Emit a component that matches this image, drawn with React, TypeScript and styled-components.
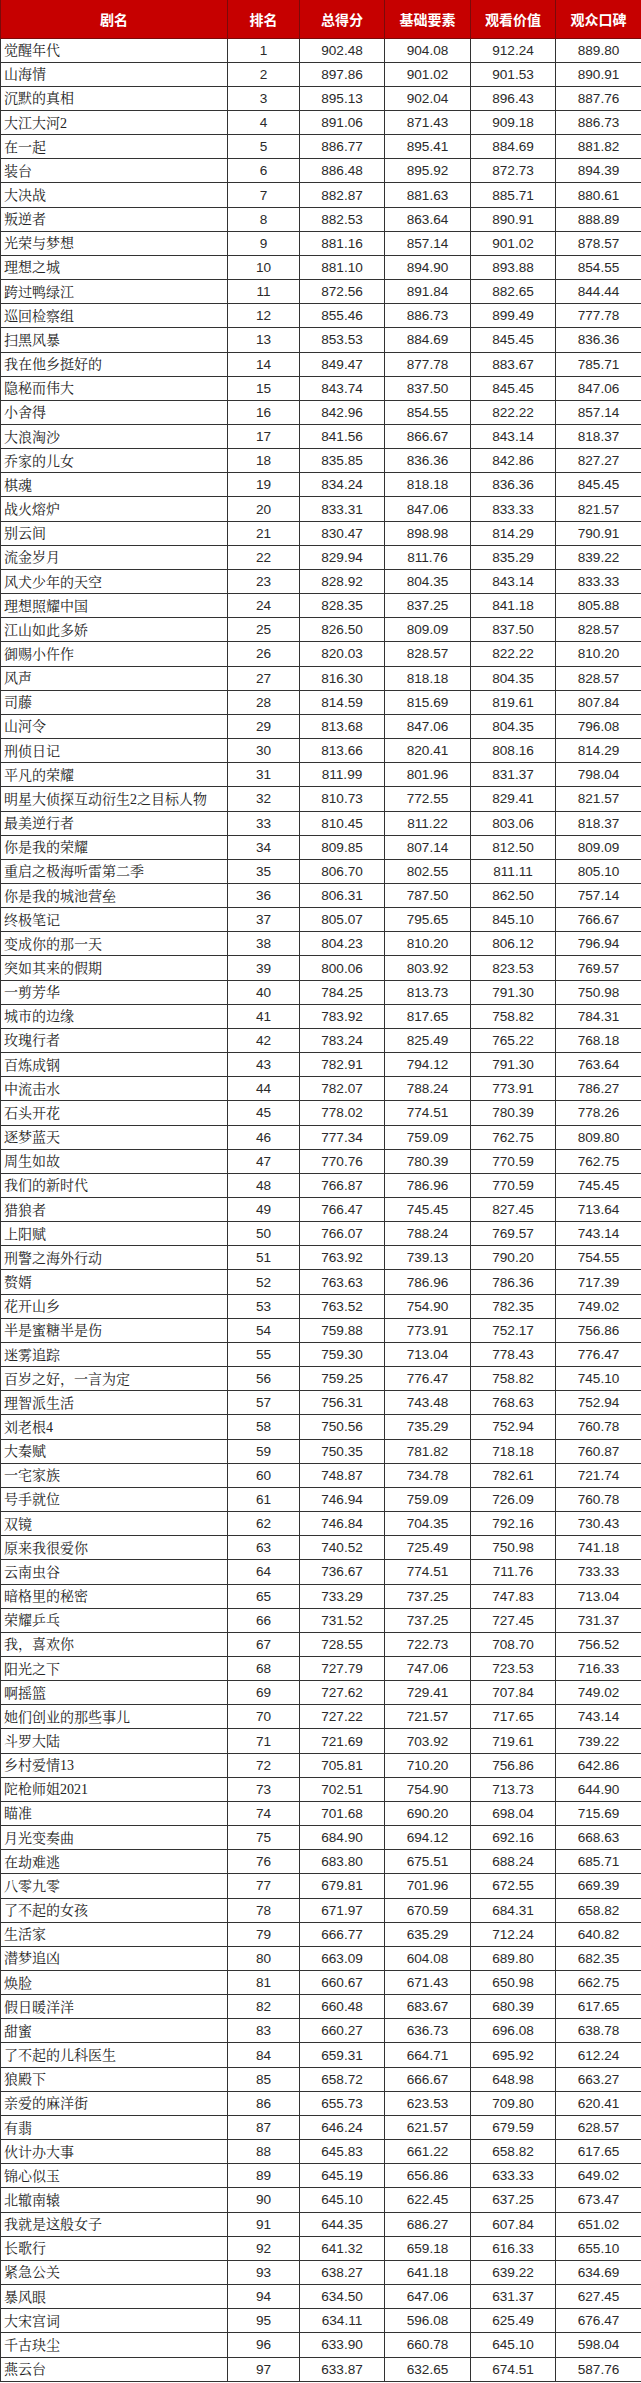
import React from "react";
import styled, { createGlobalStyle } from "styled-components";

const HEAD_RED = "#c60000";
const LINE = "#333333";
const TEXT = "#222222";

const GlobalStyle = createGlobalStyle`
  html, body {
    margin: 0;
    padding: 0;
    background: #ffffff;
  }
`;

const COLUMNS = [
  { title: "剧名", width: 227 },
  { title: "排名", width: 72 },
  { title: "总得分", width: 85 },
  { title: "基础要素", width: 86 },
  { title: "观看价值", width: 85 },
  { title: "观众口碑", width: 86 },
];

// 剧名 | 总得分 | 基础要素 | 观看价值 | 观众口碑 (排名 = 行号)
const RAW = `觉醒年代 902.48 904.08 912.24 889.80
山海情 897.86 901.02 901.53 890.91
沉默的真相 895.13 902.04 896.43 887.76
大江大河2 891.06 871.43 909.18 886.73
在一起 886.77 895.41 884.69 881.82
装台 886.48 895.92 872.73 894.39
大决战 882.87 881.63 885.71 880.61
叛逆者 882.53 863.64 890.91 888.89
光荣与梦想 881.16 857.14 901.02 878.57
理想之城 881.10 894.90 893.88 854.55
跨过鸭绿江 872.56 891.84 882.65 844.44
巡回检察组 855.46 886.73 899.49 777.78
扫黑风暴 853.53 884.69 845.45 836.36
我在他乡挺好的 849.47 877.78 883.67 785.71
隐秘而伟大 843.74 837.50 845.45 847.06
小舍得 842.96 854.55 822.22 857.14
大浪淘沙 841.56 866.67 843.14 818.37
乔家的儿女 835.85 836.36 842.86 827.27
棋魂 834.24 818.18 836.36 845.45
战火熔炉 833.31 847.06 833.33 821.57
别云间 830.47 898.98 814.29 790.91
流金岁月 829.94 811.76 835.29 839.22
风犬少年的天空 828.92 804.35 843.14 833.33
理想照耀中国 828.35 837.25 841.18 805.88
江山如此多娇 826.50 809.09 837.50 828.57
御赐小仵作 820.03 828.57 822.22 810.20
风声 816.30 818.18 804.35 828.57
司藤 814.59 815.69 819.61 807.84
山河令 813.68 847.06 804.35 796.08
刑侦日记 813.66 820.41 808.16 814.29
平凡的荣耀 811.99 801.96 831.37 798.04
明星大侦探互动衍生2之目标人物 810.73 772.55 829.41 821.57
最美逆行者 810.45 811.22 803.06 818.37
你是我的荣耀 809.85 807.14 812.50 809.09
重启之极海听雷第二季 806.70 802.55 811.11 805.10
你是我的城池营垒 806.31 787.50 862.50 757.14
终极笔记 805.07 795.65 845.10 766.67
变成你的那一天 804.23 810.20 806.12 796.94
突如其来的假期 800.06 803.92 823.53 769.57
一剪芳华 784.25 813.73 791.30 750.98
城市的边缘 783.92 817.65 758.82 784.31
玫瑰行者 783.24 825.49 765.22 768.18
百炼成钢 782.91 794.12 791.30 763.64
中流击水 782.07 788.24 773.91 786.27
石头开花 778.02 774.51 780.39 778.26
逐梦蓝天 777.34 759.09 762.75 809.80
周生如故 770.76 780.39 770.59 762.75
我们的新时代 766.87 786.96 770.59 745.45
猎狼者 766.47 745.45 827.45 713.64
上阳赋 766.07 788.24 769.57 743.14
刑警之海外行动 763.92 739.13 790.20 754.55
赘婿 763.63 786.96 786.36 717.39
花开山乡 763.52 754.90 782.35 749.02
半是蜜糖半是伤 759.88 773.91 752.17 756.86
迷雾追踪 759.30 713.04 778.43 776.47
百岁之好，一言为定 759.25 776.47 758.82 745.10
理智派生活 756.31 743.48 768.63 752.94
刘老根4 750.56 735.29 752.94 760.78
大秦赋 750.35 781.82 718.18 760.87
一宅家族 748.87 734.78 782.61 721.74
号手就位 746.94 759.09 726.09 760.78
双镜 746.84 704.35 792.16 730.43
原来我很爱你 740.52 725.49 750.98 741.18
云南虫谷 736.67 774.51 711.76 733.33
暗格里的秘密 733.29 737.25 747.83 713.04
荣耀乒乓 731.52 737.25 727.45 731.37
我，喜欢你 728.55 722.73 708.70 756.52
阳光之下 727.79 747.06 723.53 716.33
啊摇篮 727.62 729.41 707.84 749.02
她们创业的那些事儿 727.22 721.57 717.65 743.14
斗罗大陆 721.69 703.92 719.61 739.22
乡村爱情13 705.81 710.20 756.86 642.86
陀枪师姐2021 702.51 754.90 713.73 644.90
瞄准 701.68 690.20 698.04 715.69
月光变奏曲 684.90 694.12 692.16 668.63
在劫难逃 683.80 675.51 688.24 685.71
八零九零 679.81 701.96 672.55 669.39
了不起的女孩 671.97 670.59 684.31 658.82
生活家 666.77 635.29 712.24 640.82
潜梦追凶 663.09 604.08 689.80 682.35
焕脸 660.67 671.43 650.98 662.75
假日暖洋洋 660.48 683.67 680.39 617.65
甜蜜 660.27 636.73 696.08 638.78
了不起的儿科医生 659.31 664.71 695.92 612.24
狼殿下 658.72 666.67 648.98 663.27
亲爱的麻洋街 655.73 623.53 709.80 620.41
有翡 646.24 621.57 679.59 628.57
伙计办大事 645.83 661.22 658.82 617.65
锦心似玉 645.19 656.86 633.33 649.02
北辙南辕 645.10 622.45 637.25 673.47
我就是这般女子 644.35 686.27 607.84 651.02
长歌行 641.32 659.18 616.33 655.10
紧急公关 638.27 641.18 639.22 634.69
暴风眼 634.50 647.06 631.37 627.45
大宋宫词 634.11 596.08 625.49 676.47
千古玦尘 633.90 660.78 645.10 598.04
燕云台 633.87 632.65 674.51 587.76`;

interface Row {
  name: string;
  rank: number;
  scores: string[];
}

const ROWS: Row[] = RAW.split("\n").map((line, i) => {
  const parts = line.trim().split(" ");
  return { name: parts[0], rank: i + 1, scores: parts.slice(1) };
});

function App() {
  return (
    <>
      <GlobalStyle />
      <Table>
        <colgroup>
          {COLUMNS.map((c) => (
            <Col key={c.title} $w={c.width} />
          ))}
        </colgroup>
        <thead>
          <HeadRow>
            {COLUMNS.map((c) => (
              <HeadCell key={c.title}>{c.title}</HeadCell>
            ))}
          </HeadRow>
        </thead>
        <tbody>
          {ROWS.map((r) => (
            <BodyRow key={r.rank}>
              <NameCell>{r.name}</NameCell>
              <NumCell>{r.rank}</NumCell>
              {r.scores.map((s, j) => (
                <NumCell key={j}>{s}</NumCell>
              ))}
            </BodyRow>
          ))}
        </tbody>
      </Table>
    </>
  );
}

export default App;

const Table = styled.table`
  width: 641px;
  border-collapse: collapse;
  table-layout: fixed;
  color: ${TEXT};
`;
const Col = styled.col<{ $w: number }>`
  width: ${(p) => p.$w}px;
`;
const HeadRow = styled.tr`
  height: 38px;
  background-color: ${HEAD_RED};
`;
const HeadCell = styled.th`
  padding: 0;
  border: 1px solid #7a0a0a;
  border-top: none;
  color: #ffffff;
  font-family: "Noto Sans CJK SC", sans-serif;
  font-size: 14px;
  font-weight: 700;
  text-align: center;
  vertical-align: middle;
`;
const BodyRow = styled.tr`
  height: 24.16px;
`;
const NameCell = styled.td`
  padding: 2px 0 0 3px;
  border: 1px solid ${LINE};
  font-family: "Liberation Serif", "Noto Serif CJK SC", "Noto Sans CJK SC", serif;
  font-size: 14px;
  line-height: 18px;
  white-space: nowrap;
  overflow: hidden;
  vertical-align: middle;
`;
const NumCell = styled.td`
  padding: 1px 0 0;
  border: 1px solid ${LINE};
  font-family: "Liberation Sans", Arial, sans-serif;
  font-size: 13.6px;
  line-height: 18px;
  text-align: center;
  vertical-align: middle;
  color: #2a2a2a;
`;
